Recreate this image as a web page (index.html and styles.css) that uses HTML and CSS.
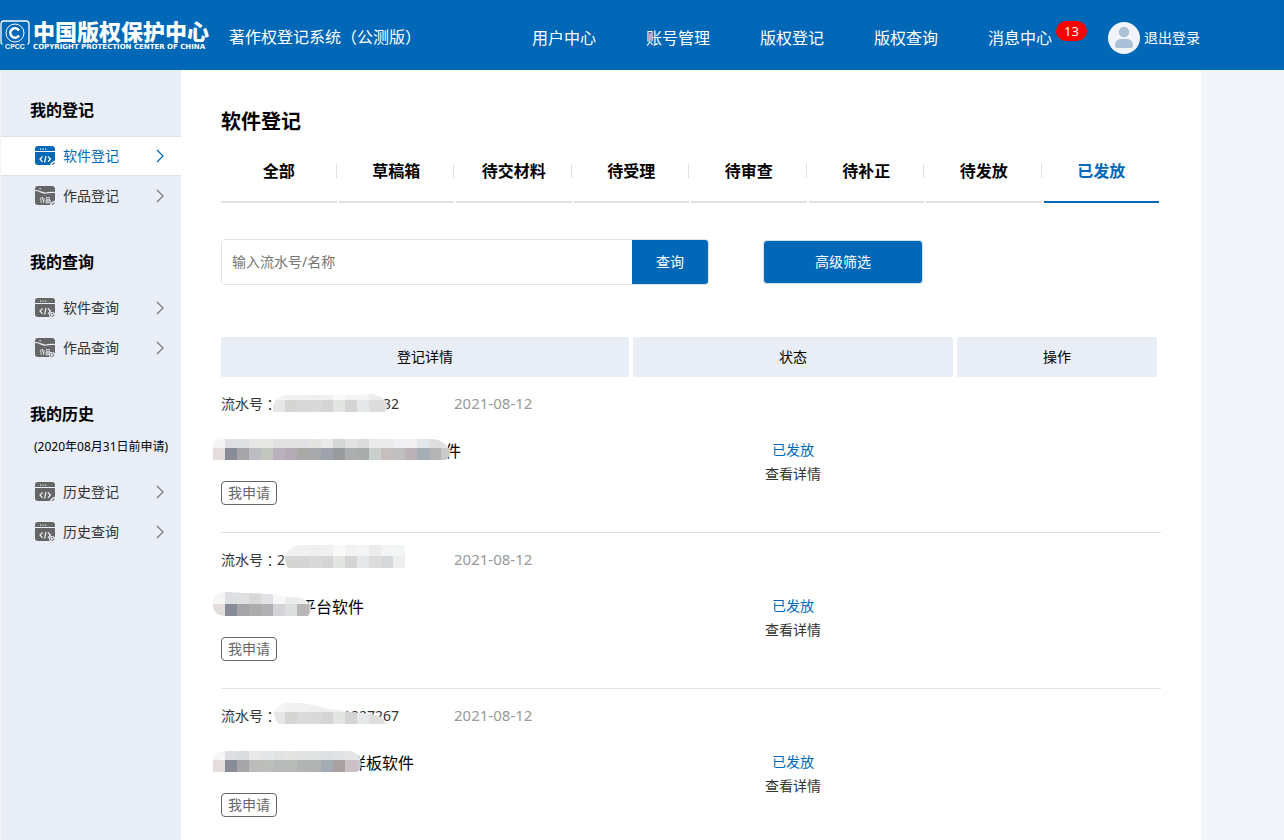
FILE: index.html
```html
<!DOCTYPE html>
<html lang="zh-CN">
<head>
<meta charset="utf-8">
<meta name="viewport" content="width=device-width, initial-scale=1">
<title>著作权登记系统</title>
<link rel="stylesheet" href="styles.css">
</head>
<body>
<svg class="sprite" aria-hidden="true">
  <symbol id="window" viewBox="0 0 20 20">
    <path fill="currentColor" d="M3 0h14q3 0 3 3v2H0V3q0-3 3-3zM0 6h20v9l-5 4H3q-3 0-3-3z"/>
    <path class="cut" d="M5 2.500h1.200v1.200H5zM7.500 2.500h1.200v1.200H7.500zM10 2.500h1.200v1.200H10z"/>
    <path class="cut-line" d="M7.500 10.500L5 13l2.500 2.800M13 10.500l2.500 2.500-2.500 2.800M11 10l-1.500 6.500"/>
  </symbol>
  <symbol id="work" viewBox="0 0 20 20">
    <path fill="currentColor" d="M3 0h14q3 0 3 3v12l-5 4H3q-3 0-3-3V3q0-3 3-3z"/>
    <path class="cut" d="M4.500 2h1.300v1.300H4.500z"/>
    <path class="cut-line" d="M0 4.500c5 0 7 3 11 2.500s6-1 9-.5"/>
    <path class="cut-thin" d="M6.500 11L5 13.500M6 13v4M8 11l-.8 2H10M8.300 13v4M8.300 15H10M11.500 11.500h3v2h-3zM11 14.500h1.700V17H11zM13.700 14.500h1.700V17h-1.700z"/>
  </symbol>
  <symbol id="pen" viewBox="0 0 20 20">
    <path class="ground" d="M20 14.500V20h-5q0-3 2-4z"/>
    <path fill="currentColor" d="M16.500 18.500l3-2.500v1.500l-2 1.500z"/>
  </symbol>
  <symbol id="gear" viewBox="0 0 20 20">
    <circle class="ground" cx="17" cy="17" r="3"/>
    <circle cx="17" cy="17" r="1.600" fill="none" stroke="currentColor" stroke-width="1.200" stroke-dasharray="1 .700"/>
  </symbol>
  <symbol id="chevron" viewBox="0 0 8 14">
    <path d="M1 1l6 6-6 6" fill="none" stroke="currentColor" stroke-width="1.200"/>
  </symbol>
</svg>

<header class="topbar">
  <div class="topbar-inner">
    <a class="brand" href="#">
      <svg class="brand-mark" viewBox="0 0 30 30" aria-hidden="true">
        <path d="M2.500 24.500Q1 24 1 22V4q0-3 3-3h22q3 0 3 3v18q0 2-1.500 2.500" fill="none" stroke="#fff" stroke-width="1.300"/>
        <circle cx="15" cy="13" r="9" fill="none" stroke="#fff" stroke-width="1"/>
        <path d="M19 10.500A4.700 4.700 0 1 0 19 15.500" fill="none" stroke="#fff" stroke-width="2.500"/>
        <text class="brand-code" x="15" y="29" text-anchor="middle">CPCC</text>
      </svg>
      <span class="brand-words">
        <span class="brand-name">中国版权保护中心</span>
        <span class="brand-sub">COPYRIGHT PROTECTION CENTER OF CHINA</span>
      </span>
    </a>
    <span class="system">著作权登记系统（公测版）</span>
    <nav class="topnav">
      <a href="#">用户中心</a>
      <a href="#">账号管理</a>
      <a href="#">版权登记</a>
      <a href="#">版权查询</a>
      <a href="#">消息中心<span class="badge">13</span></a>
    </nav>
    <a class="logout" href="#">
      <svg class="avatar" viewBox="0 0 32 32" aria-hidden="true">
        <circle cx="16" cy="16" r="16" fill="#f1f5f9"/>
        <circle cx="16" cy="10" r="5.200" fill="#a9c0d6"/>
        <path d="M7 24q0-7 6-7h6q6 0 6 7 0 2-2 2H9q-2 0-2-2z" fill="#a9c0d6"/>
      </svg>
      退出登录
    </a>
  </div>
</header>

<div class="layout">
  <aside class="sidebar">
    <section>
      <h2>我的登记</h2>
      <a class="item active" href="#"><svg class="icon"><use href="#window"/><use href="#pen"/></svg>软件登记<svg class="arrow"><use href="#chevron"/></svg></a>
      <a class="item" href="#"><svg class="icon"><use href="#work"/><use href="#pen"/></svg>作品登记<svg class="arrow"><use href="#chevron"/></svg></a>
    </section>
    <section>
      <h2>我的查询</h2>
      <a class="item" href="#"><svg class="icon"><use href="#window"/><use href="#gear"/></svg>软件查询<svg class="arrow"><use href="#chevron"/></svg></a>
      <a class="item" href="#"><svg class="icon"><use href="#work"/><use href="#gear"/></svg>作品查询<svg class="arrow"><use href="#chevron"/></svg></a>
    </section>
    <section>
      <h2>我的历史</h2>
      <p class="note">(2020年08月31日前申请)</p>
      <a class="item" href="#"><svg class="icon"><use href="#window"/><use href="#pen"/></svg>历史登记<svg class="arrow"><use href="#chevron"/></svg></a>
      <a class="item" href="#"><svg class="icon"><use href="#window"/><use href="#gear"/></svg>历史查询<svg class="arrow"><use href="#chevron"/></svg></a>
    </section>
  </aside>

  <main class="content">
    <h1>软件登记</h1>
    <nav class="tabs">
      <a href="#">全部</a>
      <a href="#">草稿箱</a>
      <a href="#">待交材料</a>
      <a href="#">待受理</a>
      <a href="#">待审查</a>
      <a href="#">待补正</a>
      <a href="#">待发放</a>
      <a class="current" href="#">已发放</a>
    </nav>

    <form class="filters">
      <div class="search">
        <input type="text" aria-label="输入流水号/名称" placeholder="输入流水号/名称">
        <button type="button">查询</button>
      </div>
      <button class="advanced" type="button">高级筛选</button>
    </form>

    <table class="records">
      <colgroup><col class="col-detail"><col class="col-status"><col></colgroup>
      <thead>
        <tr><th><span>登记详情</span></th><th><span>状态</span></th><th><span>操作</span></th></tr>
      </thead>
      <tbody>
        <tr>
          <td>
            <div class="meta">
              <span class="serial">流水号<span class="colon">：</span><svg class="mosaic tuck-sm" data-mosaic="serialA" width="115" height="24"></svg>32</span>
              <time>2021-08-12</time>
            </div>
            <div class="name"><svg class="mosaic" data-mosaic="nameA" width="237" height="24"></svg>件</div>
            <span class="tag">我申请</span>
          </td>
          <td class="status"><span class="done">已发放</span><a href="#">查看详情</a></td>
          <td></td>
        </tr>
        <tr>
          <td>
            <div class="meta">
              <span class="serial">流水号<span class="colon">：</span>2<svg class="mosaic" data-mosaic="serialB" width="120" height="24"></svg></span>
              <time>2021-08-12</time>
            </div>
            <div class="name"><svg class="mosaic tuck-md" data-mosaic="nameB" width="98" height="24"></svg>平台软件</div>
            <span class="tag">我申请</span>
          </td>
          <td class="status"><span class="done">已发放</span><a href="#">查看详情</a></td>
          <td></td>
        </tr>
        <tr>
          <td>
            <div class="meta">
              <span class="serial">流水号<span class="colon">：</span><svg class="mosaic tuck-lg" data-mosaic="serialC" width="113" height="24"></svg>1227267</span>
              <time>2021-08-12</time>
            </div>
            <div class="name"><svg class="mosaic tuck-md" data-mosaic="nameC" width="148" height="24"></svg>样板软件</div>
            <span class="tag">我申请</span>
          </td>
          <td class="status"><span class="done">已发放</span><a href="#">查看详情</a></td>
          <td></td>
        </tr>
      </tbody>
    </table>
  </main>
</div>
<script src="mosaic.js"></script>
</body>
</html>
```

FILE: styles.css
```css
* { box-sizing: border-box; }

body {
  margin: 0;
  min-height: 100vh;
  display: flex;
  flex-direction: column;
  background: #f1f5f9;
  color: #000;
  font: 14px/20px "Noto Sans", "Noto Sans CJK SC", sans-serif;
}

a { color: inherit; text-decoration: none; }
h1, h2, p { margin: 0; }
button, input { font: inherit; }

.sprite { position: absolute; width: 0; height: 0; }

/* Top bar */
.topbar { background: #0068b7; color: #fff; }
.topbar-inner {
  max-width: 1200px;
  min-height: 70px;
  display: flex;
  align-items: center;
  white-space: nowrap;
}
.brand { display: flex; align-items: center; gap: 3px; }
.brand-mark { width: 30px; height: 30px; }
.brand-code { font: bold 7px "Liberation Sans", sans-serif; fill: #fff; }
.brand-words { display: flex; flex-direction: column; width: 176px; }
.brand-name { font-size: 22px; line-height: 24px; font-weight: 900; }
.brand-sub { font: bold 7px/9px "DejaVu Sans", sans-serif; }
.system { margin-left: 20px; padding-top: 4px; font-size: 16px; }
.topnav {
  margin-left: auto;
  padding-top: 6px;
  display: flex;
  gap: 50px;
  font-size: 16px;
}
.topnav a { position: relative; }
.badge {
  position: absolute;
  left: 68px;
  top: -7px;
  width: 31px;
  border-radius: 10px;
  background: #f00;
  font-size: 13px;
  line-height: 20px;
  text-align: center;
}
.logout {
  margin-left: 56px;
  padding-top: 6px;
  display: flex;
  align-items: center;
  gap: 4px;
}
.avatar { width: 32px; height: 32px; }

/* Page frame */
.layout {
  flex: 1;
  width: calc(100% - 1px);
  max-width: 1200px;
  margin-left: 1px;
  display: flex;
}
.sidebar { flex: 0 0 180px; background: #e8edf6; }
.content { flex: 1; min-width: 0; padding: 40px 40px 0; background: #fff; }

/* Sidebar */
.sidebar section { margin-bottom: 6px; }
.sidebar h2 { padding: 30px 29px 16px; font-size: 16px; line-height: 20px; }
.note { margin-bottom: 18px; padding-left: 33px; font-size: 12px; line-height: 14px; white-space: nowrap; }
.item {
  height: 40px;
  padding: 0 17px 0 34px;
  display: flex;
  align-items: center;
  gap: 8px;
  border: solid transparent;
  border-width: 1px 0;
  color: #333;
  --ground: #e8edf6;
}
.item.active { background: #fff; border-color: #dce2e8; color: #0068b7; --ground: #fff; }
.icon { width: 20px; height: 20px; color: #666; }
.arrow { width: 8px; height: 14px; margin-left: auto; color: #777; }
.active .icon, .active .arrow { color: #0068b7; }
.cut, .ground { fill: var(--ground); }
.cut-line { fill: none; stroke: var(--ground); stroke-width: 1.2; }
.cut-thin { fill: none; stroke: var(--ground); stroke-width: .8; }

/* Heading and tabs */
h1 { font-size: 20px; line-height: 24px; }
.tabs {
  margin-top: 8px;
  padding-right: 2px;
  display: grid;
  grid-template-columns: repeat(8, 1fr);
  gap: 2px;
}
.tabs a {
  padding: 19px 0 20px;
  border-bottom: 2px solid #dde1e6;
  font-size: 16px;
  font-weight: bold;
  line-height: 20px;
  text-align: center;
  background: linear-gradient(#dce1e5, #dce1e5) right 22px / 1px 14px no-repeat;
}
.tabs .current { border-color: #0068b7; color: #0068b7; background: none; }

/* Filters */
.filters { margin-top: 36px; display: flex; align-items: center; gap: 54px; }
.search {
  width: 488px;
  height: 46px;
  display: flex;
  border: 1px solid #dce4e5;
  border-radius: 4px;
  overflow: hidden;
}
.search input {
  flex: 1;
  min-width: 0;
  padding: 0 10px;
  border: 0;
  outline: 0;
  background: #fff;
}
.search input::placeholder { color: #757575; opacity: 1; }
.search button { width: 76px; border: 0; background: #0068b7; color: #fff; }
.advanced {
  width: 160px;
  height: 44px;
  border: 1px solid #d5e0ea;
  border-radius: 4px;
  background: #0068b7;
  color: #fff;
}

/* Records */
.records {
  width: 100%;
  margin-top: 52px;
  table-layout: fixed;
  border-spacing: 0;
}
.col-detail { width: 412px; }
.col-status { width: 324px; }
th { padding: 0 4px 0 0; font-weight: normal; }
th span { display: block; border-radius: 2px; background: #e8edf6; line-height: 40px; }
td { padding: 11px 0 27px; border-bottom: 1px solid #dce4e3; vertical-align: top; }
tr:last-child td { padding-bottom: 0; border-bottom: 0; }
.meta, .serial, .name { display: flex; align-items: center; white-space: nowrap; }
.meta { height: 32px; }
.serial { width: 233px; color: #333; }
.colon { font-family: "Noto Sans CJK TC", sans-serif; }
time { padding-bottom: 2px; color: #999; font-size: 15px; }
.name { height: 30px; margin: 16px 0 15px -8px; font-size: 16px; }
.mosaic { position: relative; flex: none; margin: 0 -5px 8px 0; }
.serial .mosaic.tuck-sm, .serial .mosaic.tuck-lg { margin-left: -4px; }
.name .mosaic { margin-bottom: 6px; }
.mosaic.tuck-md { margin-right: -11px; }
.mosaic.tuck-lg { margin-right: -43px; }
.tag {
  display: block;
  width: 56px;
  border: 1px solid #666;
  border-radius: 4px;
  color: #666;
  line-height: 22px;
  text-align: center;
}
td.status { padding: 61px 4px 0 0; line-height: 24px; text-align: center; }
.status .done, .status a { display: block; color: #333; }
.status .done { color: #0068b7; }
```

FILE: mosaic.js
```js
// Pixelated covers for private values: an outline and two rows of 12px cells.
const covers = {
  serialA: {
    outline: "M0 24V18Q3 7 14 7L90 7Q97 5 103 7Q112 9 115 18L112 24Z",
    top: "f5f5f5 f1f1f2 f0f0f0 efefef f0f0f0 f9f9f8 f2f2f2 f4f4f6 ececee f0f0f0",
    bottom: "e5e6e7 d5d5d4 d8d8d8 d9d9d9 d5d5d6 e3e5e3 d5d4d5 e5e8e8 dcdcdd dcdcdc"
  },
  nameA: {
    outline: "M0 24V7Q3 3 12 3H220Q231 4 237 14Q238 20 233 24Z",
    top: "f5f5f5 dddfe2 dddfe0 e7e7e6 e8e8e6 dfe1e2 e2e2e3 e1e2e3 e4e5e0 e8e9e8 d5d6d6 e2e2e0 dcdcdd e8ebe9 eaeaeb eff0f3 f1eff0 e1e7eb dedede e2e2e4",
    bottom: "e3dedb 888c97 a5a5a8 bcbec4 c3c5bf b9b2bd b3acb7 a9aaa5 a9aaac 9fa3ae 999a9b abadae a8acab cad0cc c5c0bd c0bfc0 b9b2b7 a3aeb5 b3b4b3 ccc9cd"
  },
  serialB: {
    outline: "M3 24Q0 20 0 12Q3 2 15 1H120V24Z",
    top: "f1f1f2 f0f0f0 efefef f0f0f0 f9f9f8 f2f2f2 f4f4f6 ececee f3f4f6 f2f5f5",
    bottom: "d5d5d4 d5d5d5 d9d9d9 d5d5d6 e3e5e3 d5d4d5 e5e8e8 dcdcdd d6d9da eeeeee"
  },
  nameB: {
    outline: "M0 8Q3 0 14 0L56 2L75 5L88 6Q98 9 98 17Q98 21 95 24H12Q2 23 0 16Z",
    top: "f5f5f5 dddfe2 dddfe0 d9d7d6 e1e2e6 f7f8f8 ececec ededed eeeeee",
    bottom: "e3dedb 888c97 a5a5a8 acacac b1b1b3 d4d4d8 dbe0df b8b7b5 d2c9ce"
  },
  serialC: {
    outline: "M6 24Q1 20 1 13Q3 4 14 3H30L52 8L76 12L98 14Q109 15 113 24Z",
    top: "f5f5f5 f1f1f2 f0f0f0 efefef eeeeee eeeeee eeeeee eeeeee eeeeee eeeeee",
    bottom: "e5e6e7 d5d5d4 dadada d9d9d9 d5d5d6 e3e5e3 d5d4d5 e5e8e8 dedede dddddd"
  },
  nameC: {
    outline: "M0 24V9Q4 3 14 3H137Q148 5 148 16Q148 22 144 24Z",
    top: "f5f5f5 dddfe2 d9dddf e7e8e7 e4e7e7 e1e2e2 e4e5e0 e0e2e1 e1e2e2 dddfe5 e0e2e6 e5e5e6 e6e8ea",
    bottom: "e3dedb 888c97 a5a5a8 bcbdbb bcbebb b7bab8 b9bbb9 b2b4b3 b1b3b2 a3acb2 a8a19f cbbfc6 c8c8ca"
  }
};

const paint = (row, y, height) => row.split(" ").map((color, i) =>
  `<rect x="${i * 12}" y="${y}" width="12" height="${height}" fill="#${color}"/>`).join("");

document.querySelectorAll("[data-mosaic]").forEach(svg => {
  const key = svg.dataset.mosaic;
  const cover = covers[key];
  svg.innerHTML =
    `<clipPath id="clip-${key}"><path d="${cover.outline}"/></clipPath>` +
    `<g clip-path="url(#clip-${key})" shape-rendering="crispEdges">` +
    paint(cover.top, 0, 12) + paint(cover.bottom, 12, 12) + "</g>";
});
```
